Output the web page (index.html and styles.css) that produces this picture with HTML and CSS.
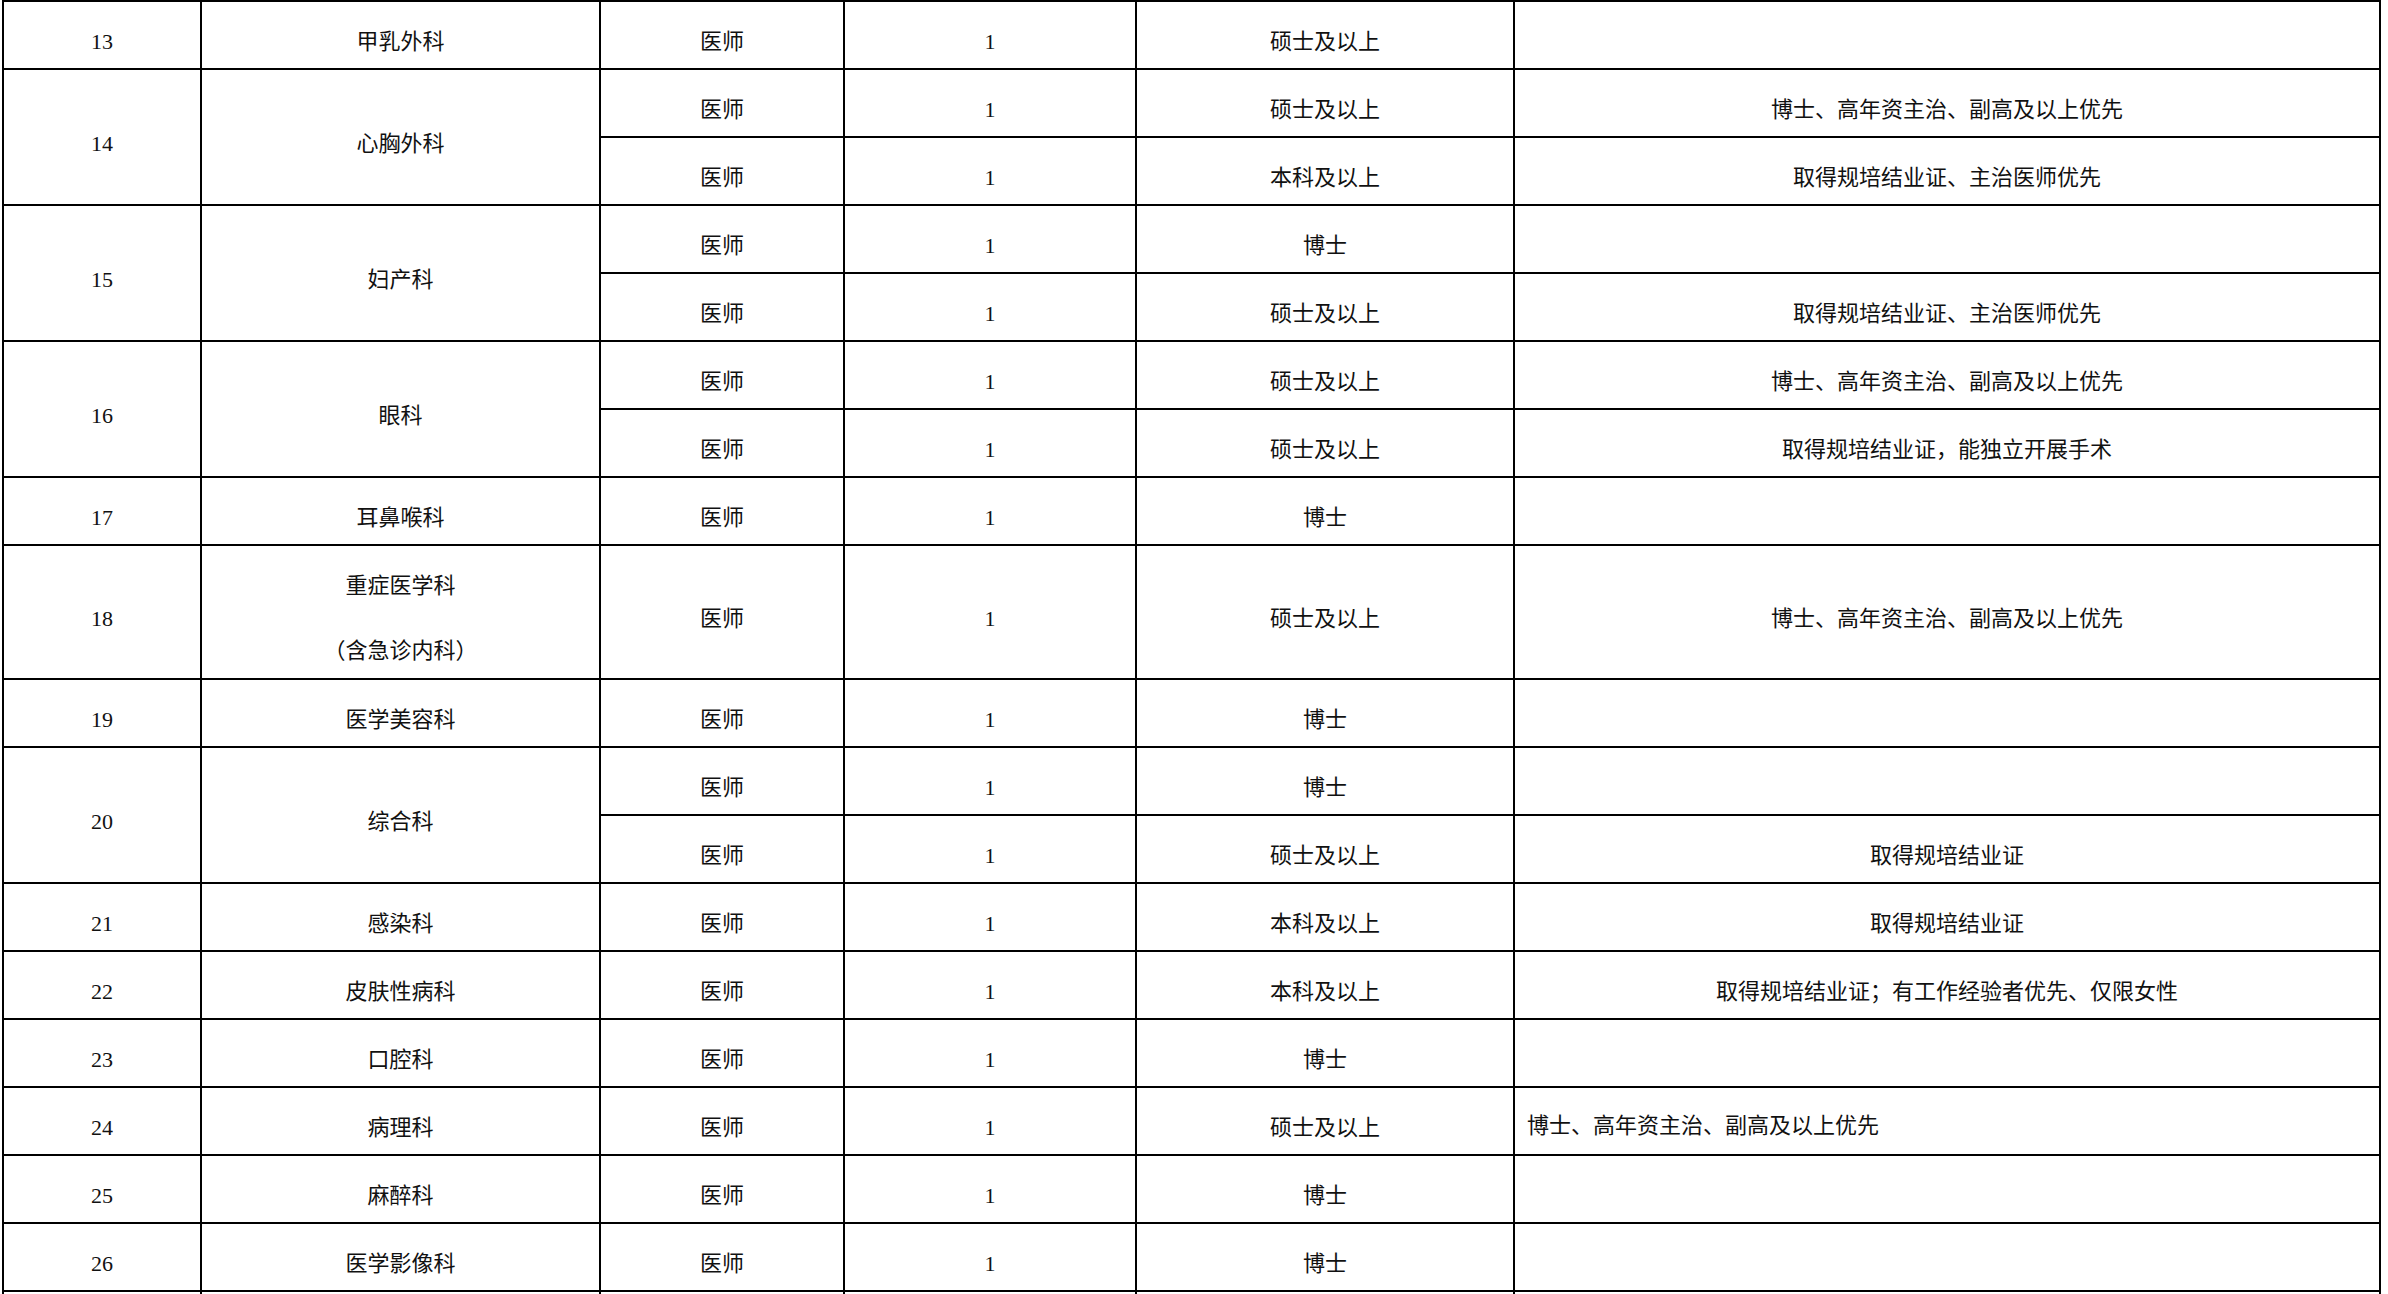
FILE: index.html
```html
<!DOCTYPE html>
<html lang="zh-CN">
<head>
<meta charset="utf-8">
<title>招聘岗位表</title>
<link rel="stylesheet" href="styles.css">
</head>
<body>
<table class="grid">
  <colgroup>
    <col class="c-no">
    <col class="c-dept">
    <col class="c-post">
    <col class="c-num">
    <col class="c-edu">
    <col class="c-note">
  </colgroup>
  <tbody>
    <tr><td>13</td><td>甲乳外科</td><td>医师</td><td>1</td><td>硕士及以上</td><td></td></tr>
    <tr><td rowspan="2">14</td><td rowspan="2">心胸外科</td><td>医师</td><td>1</td><td>硕士及以上</td><td>博士、高年资主治、副高及以上优先</td></tr>
    <tr><td>医师</td><td>1</td><td>本科及以上</td><td>取得规培结业证、主治医师优先</td></tr>
    <tr><td rowspan="2">15</td><td rowspan="2">妇产科</td><td>医师</td><td>1</td><td>博士</td><td></td></tr>
    <tr><td>医师</td><td>1</td><td>硕士及以上</td><td>取得规培结业证、主治医师优先</td></tr>
    <tr><td rowspan="2">16</td><td rowspan="2">眼科</td><td>医师</td><td>1</td><td>硕士及以上</td><td>博士、高年资主治、副高及以上优先</td></tr>
    <tr><td>医师</td><td>1</td><td>硕士及以上</td><td>取得规培结业证，能独立开展手术</td></tr>
    <tr><td>17</td><td>耳鼻喉科</td><td>医师</td><td>1</td><td>博士</td><td></td></tr>
    <tr class="tall"><td>18</td><td><div class="l1">重症医学科</div><div class="l2">（含急诊内科）</div></td><td>医师</td><td>1</td><td>硕士及以上</td><td>博士、高年资主治、副高及以上优先</td></tr>
    <tr><td>19</td><td>医学美容科</td><td>医师</td><td>1</td><td>博士</td><td></td></tr>
    <tr><td rowspan="2">20</td><td rowspan="2">综合科</td><td>医师</td><td>1</td><td>博士</td><td></td></tr>
    <tr><td>医师</td><td>1</td><td>硕士及以上</td><td>取得规培结业证</td></tr>
    <tr><td>21</td><td>感染科</td><td>医师</td><td>1</td><td>本科及以上</td><td>取得规培结业证</td></tr>
    <tr><td>22</td><td>皮肤性病科</td><td>医师</td><td>1</td><td>本科及以上</td><td>取得规培结业证；有工作经验者优先、仅限女性</td></tr>
    <tr><td>23</td><td>口腔科</td><td>医师</td><td>1</td><td>博士</td><td></td></tr>
    <tr><td>24</td><td>病理科</td><td>医师</td><td>1</td><td>硕士及以上</td><td class="left">博士、高年资主治、副高及以上优先</td></tr>
    <tr><td>25</td><td>麻醉科</td><td>医师</td><td>1</td><td>博士</td><td></td></tr>
    <tr><td>26</td><td>医学影像科</td><td>医师</td><td>1</td><td>博士</td><td></td></tr>
    <tr class="stub"><td></td><td></td><td></td><td></td><td></td><td></td></tr>
  </tbody>
</table>
</body>
</html>
```

FILE: styles.css
```css
html, body {
  margin: 0;
  padding: 0;
  background: #ffffff;
  overflow: hidden;
}

.grid {
  border-collapse: collapse;
  table-layout: fixed;
  width: 2379px;
  margin-left: 2px;
  font-family: "Liberation Serif", "Noto Sans CJK SC", serif;
  font-size: 22px;
  color: #111111;
}

.c-no { width: 198px; }
.c-dept { width: 399px; }
.c-post { width: 244px; }
.c-num { width: 292px; }
.c-edu { width: 378px; }
.c-note { width: 866px; }

.grid tr { height: 68px; }
.grid tr.tall { height: 134px; }
.grid tr.stub { height: 20px; }

.grid td {
  border: 2px solid #000000;
  text-align: center;
  vertical-align: middle;
  padding: 13px 4px 0 4px;
  line-height: 30px;
  white-space: nowrap;
}

.grid tr.stub td {
  padding: 0;
  line-height: 0;
}

.grid td.left {
  text-align: left;
  padding-left: 12px;
  padding-top: 10px;
}

.l1, .l2 {
  line-height: 32px;
}

.l2 {
  margin-top: 33px;
}
```
